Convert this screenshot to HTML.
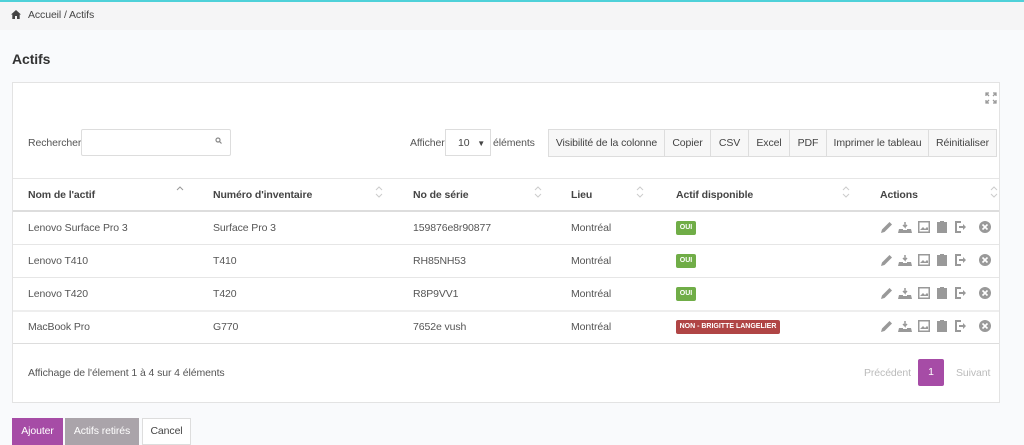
<!DOCTYPE html>
<html><head><meta charset="utf-8"><style>
*{box-sizing:border-box;margin:0;padding:0}
body{width:1024px;height:445px;overflow:hidden;background:#f9fafc;font-family:"Liberation Sans",sans-serif;font-size:10.5px;color:#555;position:relative;letter-spacing:-0.1px}
.abs{position:absolute}
.top{left:0;top:0;width:1024px;height:2px;background:#4fd1d9}
.bc{left:0;top:2px;width:1024px;height:28px;background:#f5f5f6}
.panel{left:12px;top:82px;width:988px;height:321px;background:#fff;border:1px solid #e3e3e3}
.btn{position:absolute;top:129px;height:28px;border:1px solid #ddd;background:#f7f7f7;line-height:26px;text-align:center;color:#444;white-space:nowrap}
.th{position:absolute;top:189px;font-weight:bold;color:#444}
.sort{position:absolute;top:185px}
.row{position:absolute;left:13px;width:986px;height:1px;background:#e6e6e6}
.td{position:absolute;color:#555;white-space:nowrap}
.oui{position:absolute;left:676px;width:20px;height:14px;background:#70ad47;color:#fff;font-size:7px;font-weight:bold;line-height:14px;text-align:center;border-radius:2px;letter-spacing:0}
.pb{position:absolute;top:418px;height:27px;line-height:27px;text-align:center;color:#fff}
</style></head><body>
<div class="abs top"></div>
<div class="abs bc"></div>
<svg class="abs" style="left:11px;top:10px" width="10" height="9" viewBox="0 0 10 9"><path d="M5 0L0 4.5h1.3V9h2.7V6h2v3h2.7V4.5H10z" fill="#444"/></svg>
<div class="abs" style="left:28px;top:9px;color:#444">Accueil / Actifs</div>
<div class="abs" style="left:12px;top:51px;font-size:14px;font-weight:bold;color:#333">Actifs</div>
<div class="abs panel"></div>
<svg class="abs" style="left:985px;top:92px" width="12" height="12" viewBox="0 0 12 12" fill="none" stroke="#999" stroke-width="1.3"><path d="M1 4V1h3M1 1l3 3M8 1h3v3M11 1L8 4M1 8v3h3M1 11l3-3M8 11h3V8M11 11L8 8"/></svg>
<div class="abs" style="left:28px;top:137px">Rechercher :</div>
<div class="abs" style="left:81px;top:129px;width:150px;height:27px;border:1px solid #ddd;border-radius:2px;background:#fff"></div>
<svg class="abs" style="left:215px;top:137px" width="7" height="7" viewBox="0 0 7 7" fill="none" stroke="#888" stroke-width="1.2"><circle cx="3" cy="3" r="2"/><path d="M4.5 4.5L6.5 6.5"/></svg>
<div class="abs" style="left:410px;top:137px">Afficher</div>
<div class="abs" style="left:445px;top:129px;width:46px;height:27px;border:1px solid #ddd;background:#fff;line-height:26px;padding-left:12px;color:#444">10 <span style="font-size:8px;margin-left:5px">▼</span></div>
<div class="abs" style="left:493px;top:137px">éléments</div>
<div class="btn" style="left:548px;width:117px">Visibilité de la colonne</div>
<div class="btn" style="left:664px;width:47px">Copier</div>
<div class="btn" style="left:710px;width:39px">CSV</div>
<div class="btn" style="left:748px;width:42px">Excel</div>
<div class="btn" style="left:789px;width:38px">PDF</div>
<div class="btn" style="left:826px;width:103px">Imprimer le tableau</div>
<div class="btn" style="left:928px;width:69px">Réinitialiser</div>
<div class="row" style="top:178px"></div>
<div class="th" style="left:28px">Nom de l'actif</div>
<div class="th" style="left:213px">Numéro d'inventaire</div>
<div class="th" style="left:413px">No de série</div>
<div class="th" style="left:571px">Lieu</div>
<div class="th" style="left:676px">Actif disponible</div>
<div class="th" style="left:880px">Actions</div>
<svg class="sort" style="left:176px" width="8" height="14"><path d="M1 5l3-3 3 3" fill="none" stroke="#999" stroke-width="1"/></svg>
<svg class="sort" style="left:375px" width="8" height="14"><path d="M1 5l3-3 3 3M1 9l3 3 3-3" fill="none" stroke="#ccc" stroke-width="1"/></svg>
<svg class="sort" style="left:534px" width="8" height="14"><path d="M1 5l3-3 3 3M1 9l3 3 3-3" fill="none" stroke="#ccc" stroke-width="1"/></svg>
<svg class="sort" style="left:636px" width="8" height="14"><path d="M1 5l3-3 3 3M1 9l3 3 3-3" fill="none" stroke="#ccc" stroke-width="1"/></svg>
<svg class="sort" style="left:842px" width="8" height="14"><path d="M1 5l3-3 3 3M1 9l3 3 3-3" fill="none" stroke="#ccc" stroke-width="1"/></svg>
<svg class="sort" style="left:990px" width="8" height="14"><path d="M1 5l3-3 3 3M1 9l3 3 3-3" fill="none" stroke="#ccc" stroke-width="1"/></svg>
<div class="row" style="top:210px;height:2px;background:#ddd"></div>
<div class="row" style="top:244px"></div>
<div class="row" style="top:277px"></div>
<div class="row" style="top:310px;height:2px;background:#eee"></div>
<div class="row" style="top:343px;background:#ddd"></div>

<div class="td" style="left:28px;top:222px">Lenovo Surface Pro 3</div><div class="td" style="left:213px;top:222px">Surface Pro 3</div><div class="td" style="left:413px;top:222px">159876e8r90877</div><div class="td" style="left:571px;top:222px">Montréal</div><div class="oui" style="top:221px">OUI</div>
<div class="td" style="left:28px;top:255px">Lenovo T410</div><div class="td" style="left:213px;top:255px">T410</div><div class="td" style="left:413px;top:255px">RH85NH53</div><div class="td" style="left:571px;top:255px">Montréal</div><div class="oui" style="top:254px">OUI</div>
<div class="td" style="left:28px;top:288px">Lenovo T420</div><div class="td" style="left:213px;top:288px">T420</div><div class="td" style="left:413px;top:288px">R8P9VV1</div><div class="td" style="left:571px;top:288px">Montréal</div><div class="oui" style="top:287px">OUI</div>
<div class="td" style="left:28px;top:321px">MacBook Pro</div><div class="td" style="left:213px;top:321px">G770</div><div class="td" style="left:413px;top:321px">7652e vush</div><div class="td" style="left:571px;top:321px">Montréal</div><div class="oui" style="top:320px;width:104px;background:#b04545">NON - BRIGITTE LANGELIER</div>

<svg class="abs" style="left:880px;top:220px" width="114" height="120" viewBox="0 0 114 120">
<defs><g id="ic" fill="#999">
<path d="M1 13l1-3.5 7.5-7.5 2.5 2.5-7.5 7.5z"/>
<path d="M25 2v5l-2-2M25 7l2-2" stroke="#999" stroke-width="1.5" fill="none"/><path d="M19 9h4v1h4V9h4l1 4H18z"/>
<path d="M38 1h12v12H38z M39.5 2.5v9h9v-9z" fill-rule="evenodd"/><path d="M40 10l3-3 2 2 2-2 1 1v2z"/>
<path d="M57 2h3v1h4V2h3v11h-10z"/><path d="M60 1h4v2h-4z"/>
<path d="M75 1h6v2h-4v8h4v2h-6z"/><path d="M79 6h4V4l3 3-3 3V8h-4z"/>
<circle cx="105" cy="7" r="6"/>
</g></defs>
<use href="#ic"/><use href="#ic" y="33"/><use href="#ic" y="66"/><use href="#ic" y="99"/>
<g stroke="#fff" stroke-width="1.6"><path d="M102.5 4.5l5 5M107.5 4.5l-5 5"/><path d="M102.5 37.5l5 5M107.5 37.5l-5 5"/><path d="M102.5 70.5l5 5M107.5 70.5l-5 5"/><path d="M102.5 103.5l5 5M107.5 103.5l-5 5"/></g>
</svg>

<div class="td" style="left:28px;top:367px">Affichage de l'élement 1 à 4 sur 4 éléments</div>
<div class="td" style="left:864px;top:367px;color:#bbb">Précédent</div>
<div class="abs" style="left:918px;top:359px;width:26px;height:27px;background:#a64ca6;border-radius:2px;color:#fff;text-align:center;line-height:27px">1</div>
<div class="td" style="left:956px;top:367px;color:#bbb">Suivant</div>

<div class="pb" style="left:12px;width:51px;background:#a64ca6">Ajouter</div>
<div class="pb" style="left:65px;width:74px;background:#aaa4aa">Actifs retirés</div>
<div class="pb" style="left:142px;width:49px;background:#fff;border:1px solid #ddd;color:#444;line-height:25px">Cancel</div>
</body></html>
